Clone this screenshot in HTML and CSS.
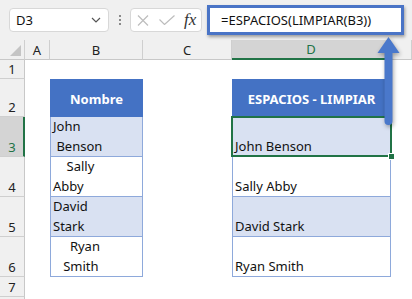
FILE: index.html
```html
<!DOCTYPE html>
<html lang="es">
<head>
  <meta charset="UTF-8">
  <meta name="viewport" content="width=device-width, initial-scale=1.0">
  <title>ESPACIOS - LIMPIAR</title>
  <link rel="stylesheet" href="styles.css">
</head>
<body>
  <div class="topbar">
    <div class="namebox">
      <span>D3</span>
      <svg class="chevron" width="10" height="6" viewBox="0 0 10 6"><path d="M1 1 L5 5 L9 1" fill="none" stroke="#555" stroke-width="1.2"/></svg>
    </div>
    <div class="grip"><i></i><i></i><i></i></div>
    <div class="fxbox">
      <svg width="12" height="11" viewBox="0 0 12 11"><path d="M1 0.5 L11 10.5 M11 0.5 L1 10.5" stroke="#bdbdbd" stroke-width="1.2"/></svg>
      <svg width="16" height="10" viewBox="0 0 16 10"><path d="M0.5 4.5 L5.5 9.5 L15.5 0.5" fill="none" stroke="#bdbdbd" stroke-width="1.2"/></svg>
      <span class="fx">fx</span>
    </div>
    <div class="formula">=ESPACIOS(LIMPIAR(B3))</div>
  </div>

  <div class="sheet">
    <div class="hd corner"><span class="tri"></span></div>
    <div class="hd col">A</div>
    <div class="hd col">B</div>
    <div class="hd col">C</div>
    <div class="hd col sel">D</div>
    <div class="hd col"></div>

    <div class="hd row">1</div>
    <div></div><div></div><div></div><div></div><div></div>

    <div class="hd row">2</div>
    <div></div>
    <div class="th">Nombre</div>
    <div></div>
    <div class="th">ESPACIOS - LIMPIAR</div>
    <div></div>

    <div class="hd row sel">3</div>
    <div></div>
    <div class="td band">John<br> Benson</div>
    <div></div>
    <div class="td band active">John Benson</div>
    <div></div>

    <div class="hd row">4</div>
    <div></div>
    <div class="td">    Sally<br>Abby</div>
    <div></div>
    <div class="td">Sally Abby</div>
    <div></div>

    <div class="hd row">5</div>
    <div></div>
    <div class="td band">David<br>Stark</div>
    <div></div>
    <div class="td band">David Stark</div>
    <div></div>

    <div class="hd row">6</div>
    <div></div>
    <div class="td">     Ryan<br>   Smith</div>
    <div></div>
    <div class="td">Ryan Smith</div>
    <div></div>

    <div class="hd row">7</div>
    <div></div><div></div><div></div><div></div><div></div>

    <div class="hd row"></div>
    <div></div><div></div><div></div><div></div><div></div>
  </div>

  <svg class="arrow" width="34" height="98" viewBox="0 0 34 98">
    <path d="M16.5 4 L27.5 20 L20.5 20 L20.5 88 Q20.5 92 16.5 92 Q12.5 92 12.5 88 L12.5 20 L5.5 20 Z" fill="#4a78cb"/>
  </svg>
</body>
</html>
```

FILE: styles.css
```css
body {
  margin: 0;
  background: #fff;
  font-family: "Noto Sans", "Open Sans", sans-serif;
  font-size: 13px;
  color: #111;
  overflow: hidden;
}
.topbar {
  height: 40px;
  background: #f0f0f0;
  display: flex;
  align-items: flex-start;
}
.namebox {
  margin: 8px 0 0 9px;
  width: 100px;
  height: 24px;
  box-sizing: border-box;
  background: #fff;
  border: 1px solid #d8d8d8;
  border-radius: 4px;
  display: flex;
  align-items: center;
  justify-content: space-between;
  padding: 0 7px 0 6px;
}
.grip {
  width: 21px;
  margin-top: 15px;
  display: flex;
  flex-direction: column;
  align-items: center;
  gap: 2px;
}
.grip i {
  width: 2px;
  height: 2px;
  background: #8a8a8a;
}
.fxbox {
  margin-top: 8px;
  width: 72px;
  height: 24px;
  box-sizing: border-box;
  background: #fff;
  border: 1px solid #d8d8d8;
  border-radius: 4px;
  display: flex;
  align-items: center;
  padding: 0 3px 0 6px;
  gap: 10px;
}
.fx {
  font-family: "Liberation Serif", "DejaVu Serif", serif;
  font-style: italic;
  font-size: 17px;
  color: #333;
  margin-left: -1px;
}
.formula {
  margin: 5px 0 0 5px;
  width: 197px;
  height: 30px;
  box-sizing: border-box;
  background: #fff;
  border: 3px solid #4a74c6;
  box-shadow: 1px 2px 3px rgba(0, 0, 0, 0.35);
  padding-left: 11px;
  line-height: 24px;
  color: #111;
  position: relative;
  z-index: 2;
}
.sheet {
  display: grid;
  grid-template-columns: 25px 25px 93px 89px 159px 1fr;
  grid-template-rows: 20px 19px 38px 40px 40px 40px 40px 20px 20px;
}
.hd {
  background: #f0f0f0;
  box-sizing: border-box;
  color: #222;
}
.hd.col {
  border-right: 1px solid #cfcfcf;
  border-bottom: 1px solid #c8c8c8;
  display: flex;
  align-items: center;
  justify-content: center;
}
.hd.col.sel {
  background: #d4d4d4;
  border-bottom: 2px solid #217346;
  color: #217346;
}
.hd.corner {
  border-right: 1px solid #cfcfcf;
  border-bottom: 1px solid #c8c8c8;
  position: relative;
}
.tri {
  position: absolute;
  right: 3px;
  bottom: 3px;
  width: 0;
  height: 0;
  border-left: 11px solid transparent;
  border-bottom: 11px solid #c4c4c4;
}
.hd.row {
  border-right: 1px solid #c8c8c8;
  border-bottom: 1px solid #cfcfcf;
  display: flex;
  align-items: flex-end;
  justify-content: center;
  line-height: 17px;
}
.hd.row.sel {
  background: #d4d4d4;
  border-right: 2px solid #217346;
  color: #217346;
  padding-left: 1px;
}
.th {
  background: #4472c4;
  color: #fff;
  font-weight: bold;
  display: flex;
  align-items: center;
  justify-content: center;
  padding-top: 1px;
}
.td {
  box-sizing: border-box;
  border: 1px solid #8ea9db;
  border-top: none;
  padding-left: 2px;
  line-height: 20px;
  white-space: pre;
  display: flex;
  flex-direction: column;
  justify-content: flex-end;
  color: #111;
}
.td.band {
  background: #d9e1f2;
}
.td.active {
  position: relative;
}
.td.active::before {
  content: "";
  position: absolute;
  left: -2px;
  top: -1px;
  right: -2px;
  bottom: -1px;
  border: 2px solid #217346;
}
.td.active::after {
  content: "";
  position: absolute;
  right: -5px;
  bottom: -4px;
  width: 5px;
  height: 5px;
  background: #217346;
  border: 1px solid #fff;
}
.arrow {
  position: absolute;
  left: 372px;
  top: 33px;
  z-index: 3;
  filter: drop-shadow(1px 2px 2px rgba(0, 0, 0, 0.35));
}
```
